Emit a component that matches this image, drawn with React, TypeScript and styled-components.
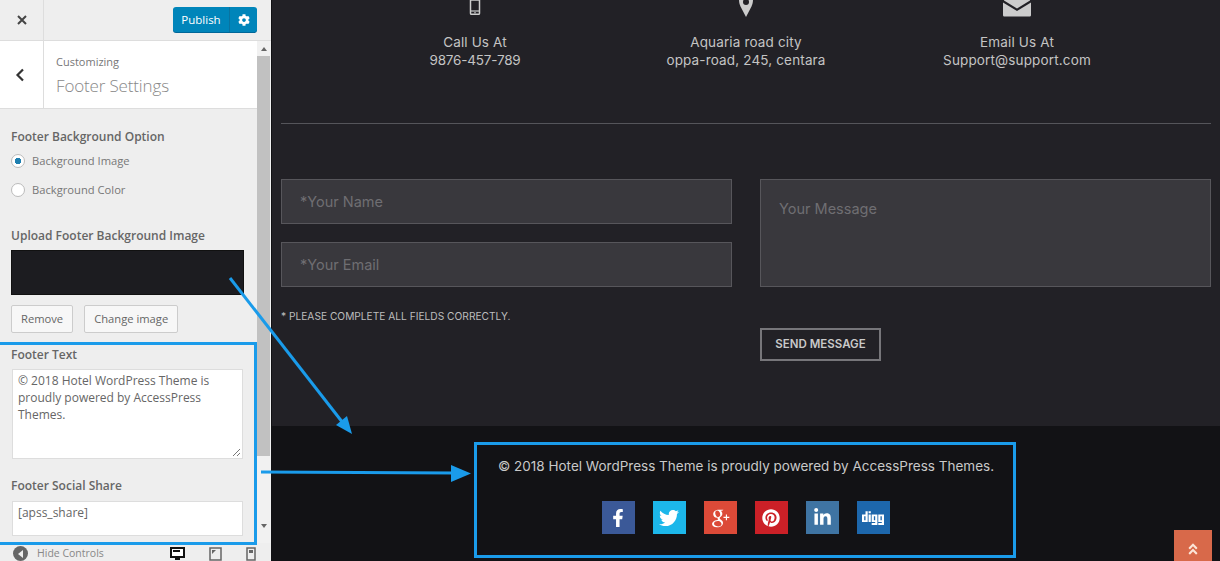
import styled, { createGlobalStyle } from "styled-components";
import { FaFacebookF, FaTwitter, FaPinterest, FaLinkedinIn, FaDigg, FaCog, FaAngleDoubleUp } from "react-icons/fa";
import { TiSocialGooglePlus } from "react-icons/ti";

const GlobalStyle = createGlobalStyle`
  html, body {
    margin: 0;
    padding: 0;
    height: 100%;
    overflow: hidden;
    background: #111114;
  }
  * {
    box-sizing: border-box;
  }
`;

const socialLinks = [
  { name: "facebook", color: "#3b5998", Icon: FaFacebookF, size: 18 },
  { name: "twitter", color: "#1cb7ea", Icon: FaTwitter, size: 20 },
  { name: "google", color: "#dc4a38", Icon: TiSocialGooglePlus, size: 28 },
  { name: "pinterest", color: "#cb2027", Icon: FaPinterest, size: 18 },
  { name: "linkedin", color: "#3f74a3", Icon: FaLinkedinIn, size: 19 },
  { name: "digg", color: "#1d67ac", Icon: FaDigg, size: 22 },
];

export default function App() {
  return (
    <Page>
      <GlobalStyle />
      <Sidebar>
        <TopBar>
          <CloseButton>
            <svg width="12" height="12" viewBox="0 0 12 12">
              <path d="M2 2l8 8M10 2l-8 8" stroke="#444" strokeWidth="2" />
            </svg>
          </CloseButton>
          <PublishGroup>
            <PublishLabel>Publish</PublishLabel>
            <PublishGear>
              <FaCog size={12} />
            </PublishGear>
          </PublishGroup>
        </TopBar>
        <ScrollArea>
          <PanelColumn>
            <SectionHead>
              <BackButton>
                <svg width="10" height="14" viewBox="0 0 10 14">
                  <path d="M8 1.5L2.5 7 8 12.5" fill="none" stroke="#333" strokeWidth="2.2" />
                </svg>
              </BackButton>
              <SectionTitles>
                <SectionSmall>Customizing</SectionSmall>
                <SectionBig>Footer Settings</SectionBig>
              </SectionTitles>
            </SectionHead>
            <Controls>
              <ControlTitle>Footer Background Option</ControlTitle>
              <RadioGroup>
                <RadioRow>
                  <Radio $checked />
                  <RadioLabel>Background Image</RadioLabel>
                </RadioRow>
                <RadioRow>
                  <Radio />
                  <RadioLabel>Background Color</RadioLabel>
                </RadioRow>
              </RadioGroup>
              <UploadTitle>Upload Footer Background Image</UploadTitle>
              <ImagePreview />
              <ButtonRow>
                <GhostButton>Remove</GhostButton>
                <GhostButton>Change image</GhostButton>
              </ButtonRow>
              <FooterTextTitle>Footer Text</FooterTextTitle>
              <TextBox>
                © 2018 Hotel WordPress Theme is proudly powered by AccessPress Themes.
                <Resizer width="9" height="9" viewBox="0 0 9 9">
                  <path d="M1 8l7-7M5 8l3-3" stroke="#777" strokeWidth="1" />
                </Resizer>
              </TextBox>
              <ShareTitle>Footer Social Share</ShareTitle>
              <ShareBox>[apss_share]</ShareBox>
            </Controls>
          </PanelColumn>
          <Scrollbar>
            <ScrollArrow $up />
            <ScrollThumb />
            <ScrollArrow />
          </Scrollbar>
        </ScrollArea>
        <BottomBar>
          <HideControls>
            <HideIcon>
              <svg width="8" height="8" viewBox="0 0 8 8">
                <path d="M6 0v8L1 4z" fill="#eee" />
              </svg>
            </HideIcon>
            Hide Controls
          </HideControls>
          <Devices>
            <svg width="15" height="14" viewBox="0 0 15 14">
              <path d="M1 1h13v9H1z" fill="#fff" stroke="#111" strokeWidth="2" />
              <path d="M3 3h7v2H3z" fill="#111" />
              <path d="M5 11h5v2H5z" fill="#111" />
            </svg>
            <svg width="13" height="14" viewBox="0 0 13 14">
              <path d="M1 1h11v12H1z" fill="none" stroke="#666" strokeWidth="1.5" />
              <path d="M3 3h4L3 7z" fill="#666" />
            </svg>
            <svg width="10" height="14" viewBox="0 0 10 14">
              <path d="M1 1h8v12H1z" fill="none" stroke="#666" strokeWidth="1.5" />
              <path d="M3 3h4v3H3z" fill="#666" />
            </svg>
          </Devices>
        </BottomBar>
      </Sidebar>

      <Preview>
        <ContactRow>
          <ContactItem>
            <IconSlot>
              <svg width="14" height="15" viewBox="0 0 14 15">
                <path d="M2.5 0h9v13.2c0 .7-.4 1.1-1 1.1h-7c-.6 0-1-.4-1-1.1z" fill="none" stroke="#ccc" strokeWidth="1.5" />
                <path d="M2.5 11h9" stroke="#ccc" strokeWidth="1.2" />
                <circle cx="7" cy="12.7" r=".8" fill="#ccc" />
              </svg>
            </IconSlot>
            <ContactText>Call Us At</ContactText>
            <ContactNumber>9876-457-789</ContactNumber>
          </ContactItem>
          <ContactItem>
            <IconSlot>
              <svg width="18" height="17" viewBox="0 0 18 17">
                <path d="M9 17L3.5 6.5C3 5.2 2 3 2 0h14c0 3-1 5.2-1.500 6.500z" fill="#ccc" />
                <circle cx="9" cy="2" r="3" fill="#222126" />
              </svg>
            </IconSlot>
            <ContactText>Aquaria road city</ContactText>
            <ContactText>oppa-road, 245, centara</ContactText>
          </ContactItem>
          <ContactItem>
            <IconSlot>
              <svg width="28" height="17" viewBox="0 0 28 17">
                <path d="M0 2.500l14 8.500 14-8.500V15c0 1-.7 1.600-1.600 1.600H1.600C.7 16.600 0 16 0 15z" fill="#ccc" />
                <path d="M1 0h26v.5L14 8.500 1 .5z" fill="#ccc" />
              </svg>
            </IconSlot>
            <ContactText>Email Us At</ContactText>
            <ContactText>Support@support.com</ContactText>
          </ContactItem>
        </ContactRow>
        <Divider />
        <FormGrid>
          <FormColumn>
            <Field>*Your Name</Field>
            <Field>*Your Email</Field>
            <FormNote>* Please complete all fields correctly.</FormNote>
          </FormColumn>
          <FormColumn>
            <MessageField>Your Message</MessageField>
            <SendButton>Send Message</SendButton>
          </FormColumn>
        </FormGrid>
        <SiteFooter>
          <Copyright>© 2018 Hotel WordPress Theme is proudly powered by AccessPress Themes.</Copyright>
          <SocialRow>
            {socialLinks.map(({ name, color, Icon, size }) => (
              <SocialIcon key={name} $color={color}>
                <Icon size={size} />
              </SocialIcon>
            ))}
          </SocialRow>
          <BackToTop>
            <FaAngleDoubleUp size={14} />
          </BackToTop>
        </SiteFooter>
      </Preview>

      <SidebarHighlight />
      <FooterHighlight />
      <ArrowLayer width="1220" height="561" viewBox="0 0 1220 561">
        <path d="M230 278L343 423" stroke="#1a9bea" strokeWidth="3" fill="none" />
        <path d="M352 434L336 425L347 416z" fill="#1a9bea" />
        <path d="M261 472L456 473" stroke="#1a9bea" strokeWidth="3" fill="none" />
        <path d="M471 473.500L451 465V482z" fill="#1a9bea" />
      </ArrowLayer>
    </Page>
  );
}

const Page = styled.div`
  position: relative;
  display: flex;
  width: 1220px;
  height: 561px;
  overflow: hidden;
  background: #111114;
`;

const Sidebar = styled.aside`
  flex: 0 0 271px;
  display: flex;
  flex-direction: column;
  height: 561px;
  overflow: hidden;
  background: #eeeeee;
  font-family: "Open Sans", sans-serif;
  color: #555d66;
`;

const TopBar = styled.div`
  flex: 0 0 41px;
  display: flex;
  align-items: center;
  justify-content: space-between;
  padding-right: 14px;
  border-bottom: 1px solid #ddd;
`;

const CloseButton = styled.div`
  display: flex;
  align-items: center;
  justify-content: center;
  width: 44px;
  height: 40px;
  border-right: 1px solid #ddd;
`;

const PublishGroup = styled.div`
  display: flex;
  width: 84px;
  height: 25px;
  margin-top: -1px;
  border-radius: 3px;
  background: #0085ba;
  box-shadow: 0 1px 0 #006799;
  color: #fff;
`;

const PublishLabel = styled.div`
  flex: 1;
  font-size: 11.5px;
  line-height: 25px;
  text-align: center;
  border-right: 1px solid #0a73a0;
`;

const PublishGear = styled.div`
  flex: 0 0 27px;
  display: flex;
  align-items: center;
  justify-content: center;
`;

const ScrollArea = styled.div`
  flex: 1;
  min-height: 0;
  display: flex;
  overflow: hidden;
`;

const PanelColumn = styled.div`
  flex: 0 0 257px;
  display: flex;
  flex-direction: column;
`;

const SectionHead = styled.div`
  flex: 0 0 68px;
  display: flex;
  background: #fff;
  border-bottom: 1px solid #ddd;
`;

const BackButton = styled.div`
  flex: 0 0 44px;
  display: flex;
  align-items: center;
  justify-content: center;
  border-right: 1px solid #ddd;
  padding-right: 3px;
`;

const SectionTitles = styled.div`
  padding: 13px 0 0 12px;
`;

const SectionSmall = styled.div`
  font-size: 11px;
  line-height: 15px;
  color: #777;
`;

const SectionBig = styled.div`
  margin-top: 5px;
  font-size: 17px;
  line-height: 24px;
  font-weight: 300;
  letter-spacing: -0.15px;
  color: #888;
`;

const Controls = styled.div`
  display: flex;
  flex-direction: column;
  padding: 20px 13px 0 11px;
`;

const ControlTitle = styled.div`
  font-size: 12px;
  line-height: 16px;
  font-weight: 600;
  color: #666;
`;

const UploadTitle = styled(ControlTitle)`
  margin-top: 24px;
`;

const FooterTextTitle = styled(ControlTitle)`
  margin-top: 14px;
`;

const ShareTitle = styled(ControlTitle)`
  margin-top: 19px;
`;

const RadioGroup = styled.div`
  margin-top: 1px;
`;

const RadioRow = styled.div`
  display: flex;
  align-items: center;
  gap: 7px;
  height: 29px;
`;

const Radio = styled.span<{ $checked?: boolean }>`
  flex: 0 0 14px;
  width: 14px;
  height: 14px;
  border-radius: 50%;
  border: 1px solid #bbb;
  background: ${({ $checked }) =>
    $checked ? "radial-gradient(circle, #1e7fb0 0 3px, #fff 3.5px)" : "#fff"};
`;

const RadioLabel = styled.span`
  font-size: 11.2px;
  color: #777;
`;

const ImagePreview = styled.div`
  height: 45px;
  margin: 6px 0 0;
  background: #1c1c20;
  border: 1px solid #111;
`;

const ButtonRow = styled.div`
  display: flex;
  gap: 11px;
  margin-top: 10px;
`;

const GhostButton = styled.div`
  height: 28px;
  padding: 0 9px;
  border: 1px solid #ccc;
  border-radius: 2px;
  background: #f7f7f7;
  font-size: 11.2px;
  line-height: 26px;
  color: #666;
`;

const TextBox = styled.div`
  position: relative;
  height: 90px;
  margin: 6px 1px 0;
  padding: 2px 5px;
  background: #fff;
  border: 1px solid #ddd;
  font-size: 12px;
  line-height: 17px;
  color: #666;
`;

const Resizer = styled.svg`
  position: absolute;
  right: 1px;
  bottom: 1px;
`;

const ShareBox = styled.div`
  height: 35px;
  margin: 7px 1px 0;
  padding: 2px 5px;
  background: #fff;
  border: 1px solid #ddd;
  font-size: 12px;
  line-height: 17px;
  color: #666;
`;

const Scrollbar = styled.div`
  flex: 0 0 14px;
  display: flex;
  flex-direction: column;
  background: #f1f1f1;
`;

const ScrollThumb = styled.div`
  flex: 0 0 400px;
  width: 13px;
  background: #c1c1c1;
`;

const ScrollArrow = styled.div<{ $up?: boolean }>`
  flex: ${({ $up }) => ($up ? "0 0 15px" : "1")};
  display: flex;
  align-items: ${({ $up }) => ($up ? "center" : "flex-end")};
  justify-content: center;
  padding-bottom: ${({ $up }) => ($up ? "0" : "15px")};
  &::before {
    content: "";
    border-left: 3.5px solid transparent;
    border-right: 3.5px solid transparent;
    border-${({ $up }) => ($up ? "bottom" : "top")}: 4px solid #666;
  }
`;

const BottomBar = styled.div`
  flex: 0 0 16px;
  display: flex;
  align-items: flex-start;
  justify-content: space-between;
  padding: 3px 15px 0 13px;
`;

const HideControls = styled.div`
  display: flex;
  align-items: center;
  gap: 9px;
  font-size: 10.5px;
  line-height: 15px;
  color: #888;
`;

const HideIcon = styled.span`
  display: flex;
  align-items: center;
  justify-content: center;
  width: 15px;
  height: 15px;
  border-radius: 50%;
  background: #666;
`;

const Devices = styled.div`
  display: flex;
  gap: 24px;
  margin-top: 1px;
`;

const Preview = styled.main`
  flex: 1;
  display: flex;
  flex-direction: column;
  margin-left: 1px;
  background: #222126;
  font-family: "Inter", sans-serif;
  color: #c9c9c9;
`;

const ContactRow = styled.div`
  display: grid;
  grid-template-columns: repeat(3, 271px);
  justify-content: center;
  height: 124px;
`;

const ContactItem = styled.div`
  display: flex;
  flex-direction: column;
  align-items: center;
`;

const IconSlot = styled.div`
  height: 33px;
  line-height: 0;
`;

const ContactText = styled.div`
  font-size: 13.5px;
  line-height: 18px;
  letter-spacing: 0.15px;
  color: #c4c4c4;
`;

const ContactNumber = styled(ContactText)`
  letter-spacing: -0.2px;
`;

const Divider = styled.div`
  height: 1px;
  margin: -1px 9px 0;
  background: #55555a;
`;

const FormGrid = styled.div`
  display: grid;
  grid-template-columns: 451px 451px;
  gap: 28px;
  height: 302px;
  padding: 55px 9px 0;
`;

const FormColumn = styled.div`
  display: flex;
  flex-direction: column;
  align-items: flex-start;
`;

const Field = styled.div`
  width: 100%;
  height: 45px;
  margin-bottom: 18px;
  padding-left: 18px;
  background: #39383d;
  border: 1px solid #57565b;
  font-size: 14.5px;
  line-height: 43px;
  color: #6f6e72;
`;

const MessageField = styled(Field)`
  height: 108px;
  margin-bottom: 41px;
  padding-top: 16px;
  line-height: 26px;
`;

const FormNote = styled.div`
  margin-top: 4px;
  font-size: 10.2px;
  line-height: 14px;
  text-transform: uppercase;
  color: #bdbdbd;
`;

const SendButton = styled.div`
  width: 121px;
  height: 33px;
  border: 2px solid #77767a;
  font-size: 11.5px;
  font-weight: 600;
  line-height: 29px;
  text-align: center;
  text-transform: uppercase;
  color: #c9c9c9;
`;

const SiteFooter = styled.footer`
  position: relative;
  flex: 1;
  display: flex;
  flex-direction: column;
  align-items: center;
  background: #121215;
`;

const Copyright = styled.div`
  margin-top: 31px;
  font-size: 13.5px;
  line-height: 18px;
  color: #c9c9c9;
`;

const SocialRow = styled.div`
  display: flex;
  gap: 18px;
  margin-top: 26px;
  margin-left: -1px;
`;

const SocialIcon = styled.div<{ $color: string }>`
  display: flex;
  align-items: center;
  justify-content: center;
  width: 33px;
  height: 33px;
  background: ${({ $color }) => $color};
  color: #fff;
`;

const BackToTop = styled.div`
  position: absolute;
  right: 8px;
  bottom: -7px;
  display: flex;
  align-items: center;
  justify-content: center;
  width: 38px;
  height: 38px;
  background: #d8694a;
  color: #fbe5d8;
`;

const SidebarHighlight = styled.div`
  position: absolute;
  left: -3px;
  top: 342px;
  width: 260px;
  height: 203px;
  border: 3px solid #1a9bea;
`;

const FooterHighlight = styled.div`
  position: absolute;
  left: 474px;
  top: 442px;
  width: 542px;
  height: 116px;
  border: 3px solid #1a9bea;
`;

const ArrowLayer = styled.svg`
  position: absolute;
  left: 0;
  top: 0;
  pointer-events: none;
`;
